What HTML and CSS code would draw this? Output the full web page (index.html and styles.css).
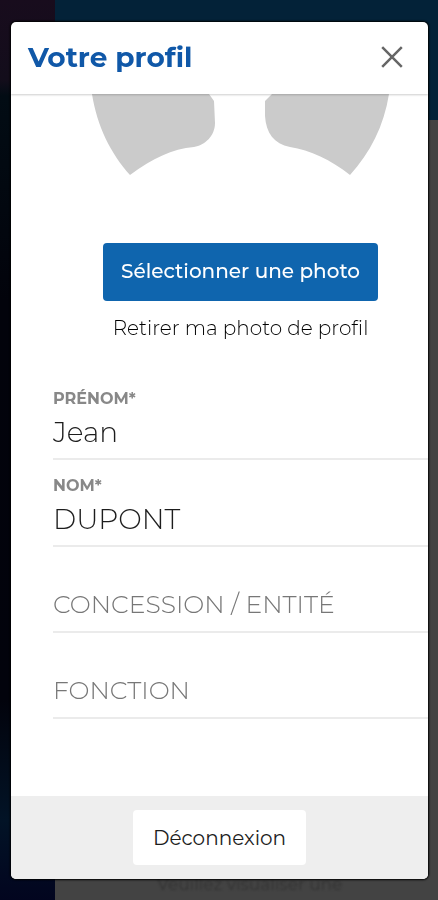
FILE: index.html
```html
<!DOCTYPE html>
<html lang="fr">
<head>
<meta charset="utf-8">
<meta name="viewport" content="width=device-width, initial-scale=1">
<title>Votre profil</title>
<link rel="stylesheet" href="styles.css">
</head>
<body>
<div class="backdrop">
  <div class="backdrop-side"></div>
  <div class="backdrop-main">
    <div class="backdrop-banner"></div>
    <p class="backdrop-text">Veuillez visualiser une</p>
  </div>
</div>
<div class="overlay">
  <section class="modal" role="dialog" aria-labelledby="modal-title">
    <header class="modal-header">
      <h1 class="modal-title" id="modal-title">Votre profil</h1>
      <button class="close" type="button" aria-label="Fermer">
        <svg class="close-icon" viewBox="0 0 22 22" aria-hidden="true"><path d="M1.2 1.2 20.8 20.8M20.8 1.2 1.2 20.8"/></svg>
      </button>
    </header>
    <form class="modal-body" id="profile">
      <svg class="avatar" viewBox="0 0 300 82" aria-hidden="true">
        <path d="M1 0H118L123 7L124 29C124 42 114 51 103 53C81 55 62 64 39 81C20 60 6 32 1 0Z"/>
        <path d="M181 0H298C293 32 279 59 259 81C240 66 219 56 199 53C183 50 175 39 174 22V7Z"/>
      </svg>
      <div class="photo-actions">
        <button class="button button-primary" type="button">Sélectionner une photo</button>
        <button class="button-link" type="button">Retirer ma photo de profil</button>
      </div>
      <div class="field">
        <label class="field-label" for="firstname">PRÉNOM*</label>
        <input class="field-input" id="firstname" type="text" value="Jean">
      </div>
      <div class="field">
        <label class="field-label" for="lastname">NOM*</label>
        <input class="field-input" id="lastname" type="text" value="DUPONT">
      </div>
      <div class="field field-empty">
        <input class="field-input" id="company" type="text" placeholder="CONCESSION / ENTITÉ" aria-label="Concession / Entité">
      </div>
      <div class="field field-empty">
        <input class="field-input" id="role" type="text" placeholder="FONCTION" aria-label="Fonction">
      </div>
    </form>
    <footer class="modal-footer">
      <button class="button button-light" type="button">Déconnexion</button>
    </footer>
  </section>
</div>
</body>
</html>
```
FILE: styles.css
```css
* {
  box-sizing: border-box;
}

body {
  margin: 0;
  background: #434343;
  font-family: Montserrat, Inter, "Open Sans", sans-serif;
  color: #1d1d1d;
}

button,
input {
  font: inherit;
  color: inherit;
  border: 0;
}

.backdrop {
  position: fixed;
  inset: 0;
  display: flex;
}

.backdrop-side {
  width: 55px;
  background: linear-gradient(#180c1d, #130d1b 80px, #020c14 96px, #02030b 300px, #02030c 700px, #021326 820px, #02051f);
}

.backdrop-main {
  flex: 1;
  display: flex;
  flex-direction: column;
  justify-content: space-between;
}

.backdrop-banner {
  height: 120px;
  background: #032238;
}

.backdrop-text {
  margin: 0 0 6px 102px;
  font-size: 17px;
  line-height: 20px;
  color: #333;
  filter: blur(1px);
}

.overlay {
  position: relative;
  display: flex;
  height: 100vh;
  padding: 22px 10px 21px 11px;
}

.modal {
  flex: 1;
  display: flex;
  flex-direction: column;
  overflow: hidden;
  background: #fff;
  border-radius: 5px;
  box-shadow: 0 0 2px 1px #000;
}

.modal-header {
  position: relative;
  display: flex;
  align-items: center;
  justify-content: space-between;
  height: 72px;
  padding: 0 25px 2px 17px;
  box-shadow: 0 1px 2px rgba(0, 0, 0, 0.2);
}

.modal-title {
  margin: 0;
  font-size: 28px;
  font-weight: 700;
  line-height: 36px;
  color: #1058a8;
}

.close {
  display: flex;
  padding: 0;
  background: none;
}

.close-icon {
  width: 22px;
  height: 22px;
  fill: none;
  stroke: #666;
  stroke-width: 2.5;
}

.modal-body {
  flex: 1;
  display: flex;
  flex-direction: column;
  min-height: 0;
  padding-left: 42px;
  overflow: hidden;
}

.avatar {
  flex: none;
  align-self: center;
  width: 300px;
  height: 82px;
  fill: #cbcbcb;
}

.photo-actions {
  display: flex;
  flex-direction: column;
  align-items: center;
  gap: 12px;
  padding: 67px 0 30px;
}

.button {
  border-radius: 4px;
  line-height: 24px;
}

.button-primary {
  padding: 16px 18px 18px;
  background: #0f65ae;
  color: #fff;
  font-size: 20px;
  font-weight: 500;
}

.button-link {
  padding: 0;
  background: none;
  color: #000;
  font-size: 20px;
  font-weight: 300;
  line-height: 30px;
}

.field {
  flex: none;
  display: flex;
  flex-direction: column;
  justify-content: flex-end;
  height: 87px;
  border-bottom: 2px solid #ebebeb;
}

.field-empty {
  height: 86px;
}

.field-label {
  font-size: 16px;
  font-weight: 700;
  line-height: 20px;
  color: #888;
}

.field-input {
  width: 100%;
  height: 49px;
  padding: 0 0 4px;
  background: none;
  font-size: 28px;
  font-weight: 300;
  outline: 0;
}

.field-input:placeholder-shown {
  padding-bottom: 6px;
  font-size: 25px;
}

.field-input::placeholder {
  color: #777;
  opacity: 1;
}

.modal-footer {
  display: flex;
  justify-content: center;
  padding: 14px;
  background: #eee;
}

.button-light {
  padding: 16px 20px 15px;
  background: #fff;
  font-size: 20px;
  font-weight: 400;
}
```
